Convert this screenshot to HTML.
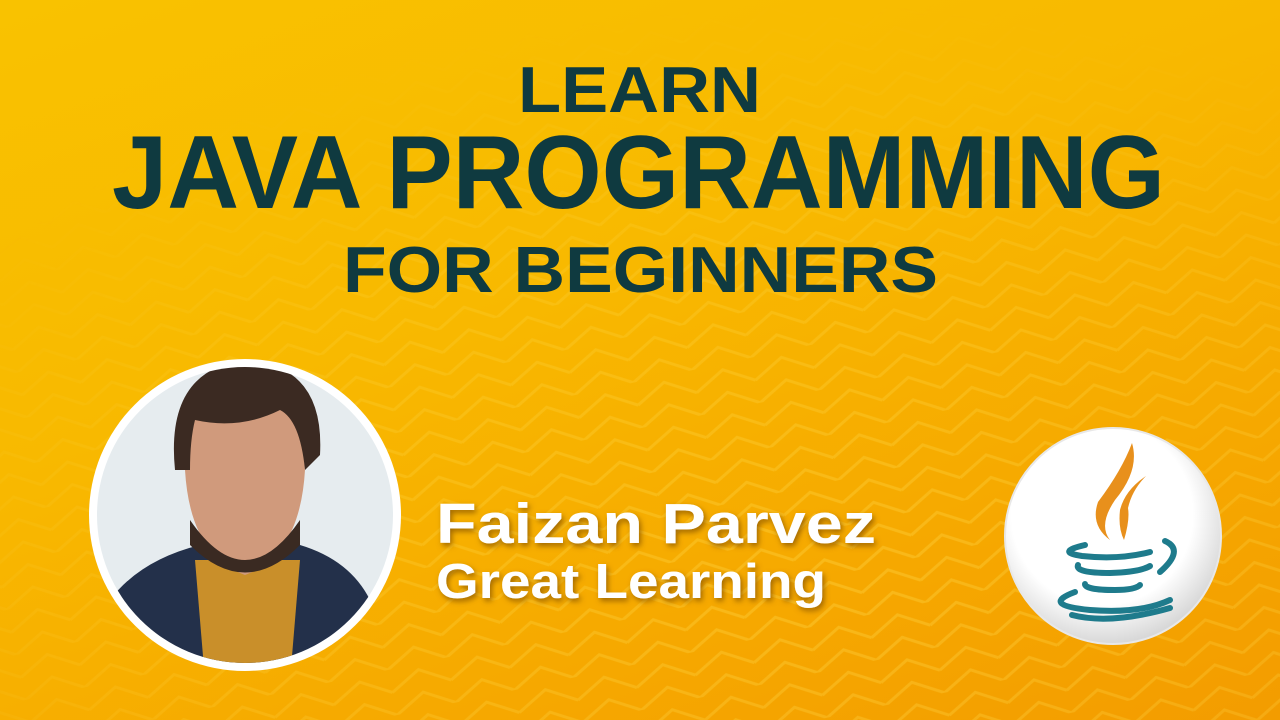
<!DOCTYPE html>
<html><head><meta charset="utf-8"><style>
html,body{margin:0;padding:0;width:1280px;height:720px;overflow:hidden}
body{background:linear-gradient(160deg,#f9c200 0%,#f8b900 40%,#f6a800 75%,#f39c00 100%)}
</style></head><body>
<svg width="1280" height="720" viewBox="0 0 1280 720" xmlns="http://www.w3.org/2000/svg" style="position:absolute;left:0;top:0">
<defs>
<pattern id="p" width="60" height="46" patternUnits="userSpaceOnUse" patternTransform="rotate(-12)">
<path d="M0 23 L30 6 L60 23 M0 46 L30 29 L60 46" fill="none" stroke="#ffd84a" stroke-width="3" opacity="0.35"/>
</pattern>
<radialGradient id="fade" cx="0.65" cy="0.8" r="0.8"><stop offset="0" stop-color="#fff"/><stop offset="0.6" stop-color="#fff" stop-opacity="0.6"/><stop offset="1" stop-color="#fff" stop-opacity="0"/></radialGradient>
<mask id="m"><rect width="1280" height="720" fill="url(#fade)"/></mask>
<radialGradient id="wg" cx="0.45" cy="0.4" r="0.6"><stop offset="0.7" stop-color="#fff"/><stop offset="1" stop-color="#d8d8d8"/></radialGradient>
<filter id="sh"><feDropShadow dx="2" dy="3" stdDeviation="3" flood-color="#7a4a00" flood-opacity="0.7"/></filter>
<clipPath id="cp"><circle cx="245" cy="515" r="148"/></clipPath>
</defs>
<rect x="0" y="0" width="1280" height="720" fill="url(#p)" mask="url(#m)"/>
<g font-family="Liberation Sans, sans-serif" font-weight="bold" fill="#0f3a40">
<text x="518" y="112" font-size="65" textLength="243" lengthAdjust="spacingAndGlyphs">LEARN</text>
<text x="112" y="208" font-size="104" textLength="1053" lengthAdjust="spacingAndGlyphs">JAVA PROGRAMMING</text>
<text x="343" y="292" font-size="65" textLength="595" lengthAdjust="spacingAndGlyphs">FOR BEGINNERS</text>
</g>
<g font-family="Liberation Sans, sans-serif" font-weight="bold" fill="#fff" filter="url(#sh)">
<text x="436" y="543" font-size="57" textLength="440" lengthAdjust="spacingAndGlyphs">Faizan Parvez</text>
<text x="436" y="598" font-size="49" textLength="390" lengthAdjust="spacingAndGlyphs">Great Learning</text>
</g>
<circle cx="245" cy="515" r="156" fill="#fff"/>
<g clip-path="url(#cp)">
<rect x="90" y="360" width="320" height="320" fill="#e6ecef"/>
<path d="M100 680 L110 600 Q140 560 200 545 L300 545 Q350 560 370 600 L390 680Z" fill="#23304a"/>
<path d="M195 560 L300 560 L290 680 L205 680Z" fill="#c98f2a"/>
<path d="M185 470 Q180 400 240 385 Q300 390 305 470 Q300 555 245 575 Q190 555 185 470Z" fill="#d09a7c"/>
<path d="M190 520 Q245 600 300 520 L300 545 Q245 600 190 545Z" fill="#3a2a22"/>
<path d="M175 470 Q165 370 245 360 Q325 365 320 455 L305 470 Q300 420 280 410 Q240 430 195 420 Q190 440 190 470Z" fill="#3b2a22"/>
</g>
<circle cx="1113" cy="536" r="108" fill="url(#wg)" stroke="#e8e8e8" stroke-width="2"/>
<g fill="#e8901c">
<path d="M1132 443 Q1140 470 1115 500 Q1098 525 1110 540 Q1090 525 1098 502 Q1122 470 1132 443Z"/>
<path d="M1146 476 Q1125 490 1120 510 Q1118 528 1124 540 Q1130 520 1128 508 Q1132 490 1146 476Z"/>
</g>
<g fill="none" stroke="#1e7b8c" stroke-width="6" stroke-linecap="round">
<path d="M1085 545 Q1055 552 1082 556 Q1120 560 1150 552"/>
<path d="M1165 541 Q1185 550 1160 572"/>
<path d="M1078 565 Q1075 573 1110 573 Q1140 572 1150 566"/>
<path d="M1085 584 Q1085 590 1115 590 Q1135 590 1140 585"/>
<path d="M1075 592 Q1040 605 1090 610 Q1140 614 1170 600"/>
<path d="M1072 615 Q1110 625 1170 608"/>
</g>
</svg>
</body></html>
